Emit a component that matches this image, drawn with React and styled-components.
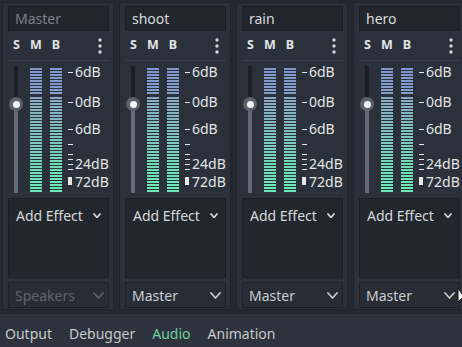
import React from 'react';
import styled, { createGlobalStyle } from 'styled-components';

const GlobalStyle = createGlobalStyle`
  html, body {
    margin: 0;
    padding: 0;
    background: #2d333c;
  }
  body {
    font-family: "Noto Sans", "DejaVu Sans", sans-serif;
  }
`;

const Editor = styled.div`
  position: relative;
  width: 462px;
  height: 347px;
  display: flex;
  flex-direction: column;
  overflow: hidden;
  background: #2d333c;
`;

const BusRow = styled.div`
  display: flex;
  gap: 5px;
  height: 313px;
  box-sizing: border-box;
  padding: 2px 0 3px 2px;
  background: #242930;
  overflow: hidden;
`;

const Strip = styled.div`
  flex: none;
  width: 112px;
  box-sizing: border-box;
  display: flex;
  flex-direction: column;
  padding: 3px 4px 1px 5px;
  background: #2b313a;
  border: 1px solid #1f242a;
`;

const NameField = styled.div`
  height: 25px;
  box-sizing: border-box;
  display: flex;
  align-items: center;
  padding: 0 6px;
  font-size: 14px;
  color: ${(p) => (p.$readonly ? '#7a8088' : '#d8dadd')};
  background: #21262d;
  border: 1px solid #1b1f25;
`;

const ControlRow = styled.div`
  height: 29px;
  display: flex;
  align-items: center;
  gap: 10px;
  padding-left: 5px;
`;

const Toggle = styled.span`
  font-size: 12.5px;
  font-weight: 700;
  line-height: 1;
  color: #e2e4e6;
`;

const Dots = styled.svg`
  margin-left: auto;
  margin-right: 6px;
  margin-top: 1px;
`;

const Separator = styled.div`
  height: 1px;
  background: #3a414b;
`;

const MeterRow = styled.div`
  height: 137px;
  display: flex;
  align-items: flex-start;
`;

const Track = styled.div`
  position: relative;
  flex: none;
  width: 4px;
  height: 127px;
  margin: 5px 0 0 6px;
  background: #646b75;
`;

const TrackEmpty = styled.div`
  background: #1b1f25;
`;

const Handle = styled.div`
  position: absolute;
  left: -5px;
  width: 14px;
  height: 14px;
  margin-top: -7px;
  border-radius: 50%;
  background: #5b626b;
  display: flex;
  align-items: center;
  justify-content: center;

  &::after {
    content: '';
    width: 7px;
    height: 7px;
    border-radius: 50%;
    background: #f4f4f4;
  }
`;

const Meters = styled.div`
  display: flex;
  gap: 8px;
  margin: 7px 0 0 12px;
`;

const Meter = styled.div`
  width: 12px;
  height: 124px;
  display: flex;
  flex-direction: column;
`;

const MeterPart = styled.div`
  background-image:
    repeating-linear-gradient(to bottom, transparent 0 2px, #2b313a 2px 3px),
    ${(p) => p.$fill};
`;

const Scale = styled.div`
  position: relative;
  flex: 1;
  height: 137px;
  margin-left: 6px;
`;

const Tick = styled.div`
  position: absolute;
  left: 0;
  width: ${(p) => (p.$block ? 4 : 5)}px;
  height: ${(p) => p.$h || 1}px;
  background: #e6e6e6;
`;

const ScaleLabel = styled.div`
  position: absolute;
  left: 7px;
  font-size: 14px;
  line-height: 14px;
  color: #e2e4e6;
  white-space: nowrap;
`;

const EffectsBox = styled.div`
  height: 80px;
  box-sizing: border-box;
  padding: 7px 7px 0 7px;
  background: #22272e;
  border: 1px solid #1b1f25;
`;

const EffectsHeader = styled.div`
  display: flex;
  justify-content: space-between;
  align-items: center;
  font-size: 14px;
  color: #d4d7da;
`;

const Dropdown = styled.div`
  height: 26px;
  margin-top: 4px;
  box-sizing: border-box;
  display: flex;
  align-items: center;
  justify-content: space-between;
  padding: 0 4px 0 6px;
  background: #282d35;
  border: 1px solid #1e2228;
  font-size: 14px;
  color: ${(p) => (p.$disabled ? '#5f656e' : '#c9ccd0')};
`;

const TabBar = styled.div`
  flex: 1;
  display: flex;
  align-items: center;
  gap: 17px;
  padding: 5px 0 0 5px;
  background: #2d333c;
  border-top: 1px solid #20252b;
`;

const Tab = styled.span`
  font-size: 14px;
  color: ${(p) => (p.$active ? '#6bd0a4' : '#c6c9cd')};
`;

const Cursor = styled.svg`
  position: absolute;
  left: 457px;
  top: 287px;
`;

const Chevron = ({ w = 8, h = 5, color }) => (
  <svg width={w + 2} height={h + 2} viewBox={`-1 -1 ${w + 2} ${h + 2}`} style={{ display: 'block' }}>
    <polyline
      points={`0,0 ${w / 2},${h} ${w},0`}
      fill="none"
      stroke={color}
      strokeWidth="1.8"
      strokeLinecap="round"
      strokeLinejoin="round"
    />
  </svg>
);

const ticks = [
  { y: 11 },
  { y: 41 },
  { y: 68 },
  { y: 83 },
  { y: 93 },
  { y: 98 },
  { y: 103 },
  { y: 108 },
  { y: 116, h: 8, block: true },
];

const labels = [
  { y: 11, text: '6dB' },
  { y: 41, text: '0dB' },
  { y: 68, text: '6dB' },
  { y: 103, text: '24dB' },
  { y: 121, text: '72dB' },
];

const buses = [
  { name: 'Master', readonly: true, send: 'Speakers', disabled: true },
  { name: 'shoot', send: 'Master' },
  { name: 'rain', send: 'Master' },
  { name: 'hero', send: 'Master' },
];

const BLUE = 'linear-gradient(to bottom, #7f97d0, #849fcc)';
const GREEN = 'linear-gradient(to bottom, #8aa9c4 0%, #7fc3bf 40%, #6fe2b6 80%, #6cebb8 100%)';

const VolumeSlider = ({ value }) => (
  <Track>
    <TrackEmpty style={{ height: value }} />
    <Handle style={{ top: value }} />
  </Track>
);

const VuMeter = () => (
  <Meter>
    <MeterPart $fill={BLUE} style={{ height: 26 }} />
    <div style={{ height: 3 }} />
    <MeterPart $fill={GREEN} style={{ height: 95 }} />
  </Meter>
);

const BusStrip = ({ bus }) => (
  <Strip>
    <NameField $readonly={bus.readonly}>{bus.name}</NameField>
    <ControlRow>
      <Toggle>S</Toggle>
      <Toggle>M</Toggle>
      <Toggle>B</Toggle>
      <Dots width="6" height="16" viewBox="0 0 6 16">
        <circle cx="3" cy="2" r="1.7" fill="#d4d6d9" />
        <circle cx="3" cy="8" r="1.7" fill="#d4d6d9" />
        <circle cx="3" cy="14" r="1.7" fill="#d4d6d9" />
      </Dots>
    </ControlRow>
    <Separator />
    <MeterRow>
      <VolumeSlider value={38} />
      <Meters>
        <VuMeter />
        <VuMeter />
      </Meters>
      <Scale>
        {ticks.map((t) => (
          <Tick key={t.y} $h={t.h} $block={t.block} style={{ top: t.y }} />
        ))}
        {labels.map((l) => (
          <ScaleLabel key={l.y} style={{ top: l.y - 7.5 }}>
            {l.text}
          </ScaleLabel>
        ))}
      </Scale>
    </MeterRow>
    <EffectsBox>
      <EffectsHeader>
        <span>Add Effect</span>
        <Chevron w={6} h={3.5} color="#d0d3d6" />
      </EffectsHeader>
    </EffectsBox>
    <Dropdown $disabled={bus.disabled}>
      <span>{bus.send}</span>
      <Chevron w={9} h={5} color={bus.disabled ? '#5a6069' : '#c2c6ca'} />
    </Dropdown>
  </Strip>
);

export default function App() {
  return (
    <>
      <GlobalStyle />
      <Editor>
        <BusRow>
          {buses.map((b) => (
            <BusStrip key={b.name} bus={b} />
          ))}
        </BusRow>
        <TabBar>
          <Tab>Output</Tab>
          <Tab>Debugger</Tab>
          <Tab $active>Audio</Tab>
          <Tab>Animation</Tab>
        </TabBar>
        <Cursor width="8" height="18" viewBox="0 0 8 18">
          <polygon points="1,1 1,15 4.5,11.5 8,11.5" fill="#ffffff" stroke="#111" strokeWidth="1" />
        </Cursor>
      </Editor>
    </>
  );
}
